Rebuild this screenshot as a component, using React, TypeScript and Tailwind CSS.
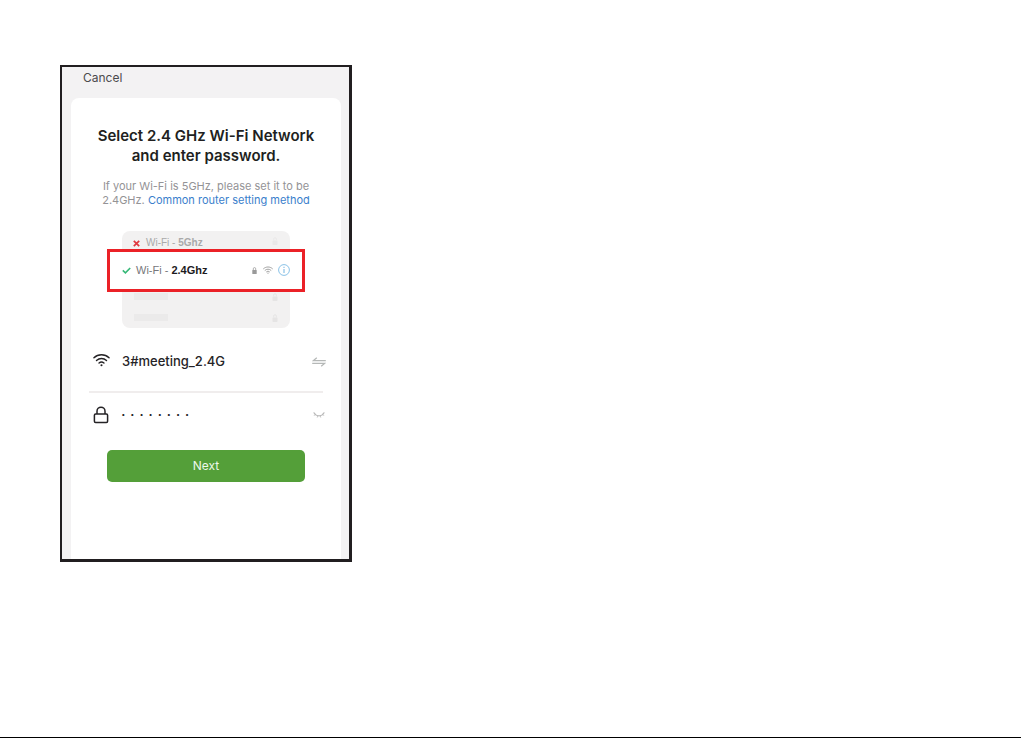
import { useState } from "react";

function WifiIcon({ className }: { className?: string }) {
  return (
    <svg viewBox="0 0 18 14" className={className} fill="none" stroke="currentColor" strokeLinecap="round" aria-hidden>
      <path d="M1 4.6C5.4.4 12.6.4 17 4.6" strokeWidth="1.5" />
      <path d="M3.7 7.5c3-2.8 7.6-2.8 10.6 0" strokeWidth="1.5" />
      <path d="M6.4 10.2c1.5-1.3 3.7-1.3 5.2 0" strokeWidth="1.5" />
      <circle cx="9" cy="12.6" r="1.1" fill="currentColor" stroke="none" />
    </svg>
  );
}

function LockIcon() {
  return (
    <svg viewBox="0 0 16 18" className="h-[18px] w-4" fill="none" stroke="currentColor" strokeWidth="1.5" aria-hidden>
      <rect x="1.4" y="8" width="13.2" height="8.4" rx="1.2" />
      <path d="M4 8V5.2a4 4 0 0 1 8 0V8" />
    </svg>
  );
}

function SmallLock({ className }: { className?: string }) {
  return (
    <svg viewBox="0 0 5 7" className={className} fill="currentColor" aria-hidden>
      <rect x="0.3" y="3" width="4.4" height="4" rx="0.6" />
      <path d="M1.3 3V1.8a1.2 1.2 0 0 1 2.4 0V3" fill="none" stroke="currentColor" strokeWidth="0.8" />
    </svg>
  );
}

function SwapIcon() {
  return (
    <svg viewBox="0 0 14 10" className="h-[10px] w-[14px]" fill="none" stroke="currentColor" strokeWidth="1.3" aria-hidden>
      <path d="M4.8.8 1.4 3.6H13.8" />
      <path d="M9.2 9.2 12.6 6.4H.2" />
    </svg>
  );
}

function ClosedEyeIcon() {
  return (
    <svg viewBox="0 0 12 6" className="h-[6px] w-3" fill="none" stroke="currentColor" strokeLinecap="round" aria-hidden>
      <path d="M1 .8c2 4 8 4 10 0" strokeWidth="1.2" />
      <path d="M2.2 2.6l-.9.9M4.6 4l-.3 1.2M7.4 4l.3 1.2M9.8 2.6l.9.9" strokeWidth="0.8" />
    </svg>
  );
}

function PlaceholderRow() {
  return (
    <div className="flex h-[21px] items-center justify-between px-3">
      <span className="h-[7px] w-[34px] bg-[#ebeaea]" />
      <SmallLock className="h-2 w-[6px] text-[#e5e4e4]" />
    </div>
  );
}

function NetworkPreview() {
  return (
    <div className="mt-6 flex flex-col items-center font-['Liberation_Sans',sans-serif] text-[11px]">
      <div className="flex h-[18px] w-[168px] items-end rounded-t-lg bg-[#f2f1f1] pl-[11px]">
        <div className="flex flex-1 items-center leading-[12px] text-[#a9a9a9]">
          <svg viewBox="0 0 7 7" className="mr-[6px] h-[7px] w-[7px]" stroke="#e0383e" strokeWidth="1.7" aria-hidden>
            <path d="m.8.8 5.4 5.4M6.2.8.8 6.2" />
          </svg>
          <span className="text-[10px]">
            Wi-Fi - <b>5Ghz</b>
          </span>
        </div>
        <SmallLock className="mr-3 mb-1 h-2 w-[6px] text-[#e9e8e8]" />
      </div>
      <div className="flex h-[43px] w-[198px] items-center border-3 border-[#eb2127] bg-white px-3 pb-[1px] text-[#77777b]">
        <svg viewBox="0 0 9 7" className="mr-[5px] h-[7px] w-[9px]" fill="none" stroke="#35b877" strokeWidth="1.6" aria-hidden>
          <path d="m.8 3.4 2.6 2.4L8.2 1" />
        </svg>
        <span>
          Wi-Fi - <b className="text-[#1d1b1e]">2.4Ghz</b>
        </span>
        <SmallLock className="mr-[6px] ml-auto h-[7px] w-[5px] text-[#9a9a9a]" />
        <WifiIcon className="mr-[5px] h-2 w-[10px] text-[#8f8f8f]" />
        <svg viewBox="0 0 12 12" className="h-3 w-3" fill="none" stroke="#7dbbe4" aria-hidden>
          <circle cx="6" cy="6" r="5.4" strokeWidth="0.9" />
          <path d="M6 5v4M6 2.8v1.1" strokeWidth="1.1" />
        </svg>
      </div>
      <div className="h-9 w-[168px] rounded-b-lg bg-[#f2f1f1]">
        <div className="-mt-[6px]">
          <PlaceholderRow />
          <PlaceholderRow />
        </div>
      </div>
    </div>
  );
}

export default function App() {
  const [network, setNetwork] = useState("3#meeting_2.4G");
  const [password, setPassword] = useState("· · · · · · · ·");

  return (
    <main className="min-h-screen border-b border-black bg-white px-[60px] pt-[65px] font-[Inter,sans-serif]">
      <section className="w-full max-w-[292px] border-t-2 border-r-3 border-b-3 border-l-2 border-[#211e20] bg-[#f3f2f3] pr-2 pl-[9px]">
        <header className="flex h-[31px] items-start pt-[2px] pl-3">
          <button type="button" className="text-[12px] leading-[18px] text-[#4b4a4d]">
            Cancel
          </button>
        </header>

        <form className="rounded-t-lg bg-white px-[18px] pt-7 pb-[77px]" onSubmit={(e) => e.preventDefault()}>
          <h1 className="text-center text-[15px] leading-5 font-semibold whitespace-nowrap text-[#211f21]">
            Select 2.4 GHz Wi-Fi Network
            <br />
            and enter password.
          </h1>
          <p className="mt-[13px] text-center text-[11px] leading-[14px] whitespace-nowrap text-[#949396]">
            If your Wi-Fi is 5GHz, please set it to be
            <br />
            2.4GHz.{" "}
            <a href="#router" className="text-[#3a80cc]">
              Common router setting method
            </a>
          </p>

          <NetworkPreview />

          <div className="mt-1 flex h-[61px] items-center border-b-2 border-[#f0eded] pl-1 text-[#252326]">
            <label htmlFor="network" aria-label="Wi-Fi network" className="mr-3 pb-1">
              <WifiIcon className="h-[14px] w-[17px]" />
            </label>
            <input
              id="network"
              className="min-w-0 flex-1 bg-transparent text-[13px] font-medium outline-none"
              value={network}
              onChange={(e) => setNetwork(e.target.value)}
            />
            <button type="button" aria-label="Switch network" className="-mr-[3px] text-[#b5b8b7]">
              <SwapIcon />
            </button>
          </div>

          <div className="flex h-11 items-center pl-1 text-[#252326]">
            <label htmlFor="password" aria-label="Password" className="mr-3">
              <LockIcon />
            </label>
            <input
              id="password"
              className="min-w-0 flex-1 bg-transparent text-[16px] outline-none"
              value={password}
              onChange={(e) => setPassword(e.target.value)}
            />
            <button type="button" aria-label="Show password" className="-mr-[2px] text-[#b9b9b9]">
              <ClosedEyeIcon />
            </button>
          </div>

          <div className="mt-[13px] px-[18px]">
            <button type="submit" className="h-8 w-full rounded-[5px] bg-[#549f39] text-[12px] text-[#eef7ea]">
              Next
            </button>
          </div>
        </form>
      </section>
    </main>
  );
}
